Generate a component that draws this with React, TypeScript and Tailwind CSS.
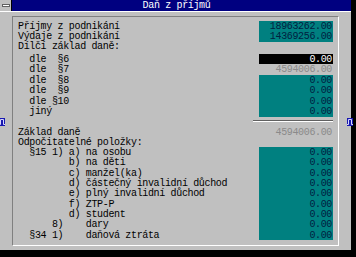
import type { ReactNode } from 'react'

type Tone = 'teal' | 'black' | 'gray' | 'none'

function Row({ label, value, tone = 'none', h }: { label: string; value?: string; tone?: Tone; h: string }) {
  const cell =
    tone === 'teal'
      ? 'bg-[#008080] text-[#002040]'
      : tone === 'black'
        ? 'bg-black text-white'
        : tone === 'gray'
          ? 'text-[#8a8a8a]'
          : ''
  return (
    <div className={`flex items-center ${h}`}>
      <div className="flex-1 whitespace-pre">{label}</div>
      <div className={`w-[74px] h-full flex items-center justify-end pr-[1px] ${cell}`}>{value}</div>
    </div>
  )
}

function Marker({ className }: { className: string }): ReactNode {
  return (
    <svg className={`absolute ${className}`} width="6" height="8" viewBox="0 0 6 8">
      <rect width="6" height="8" fill="#1818b0" />
      <path d="M0 6.5H1.5V1.5H4.5V6.5H6" stroke="#d8d8ff" strokeWidth="1" fill="none" />
    </svg>
  )
}

export default function App() {
  const r = 'h-[10.5px]'
  const s = 'h-[10.3px]'
  return (
    <div
      className="w-[356px] h-[257px] bg-black overflow-hidden text-[10px] tracking-[-0.35px] leading-[9px] text-black"
      style={{ fontFamily: '"Liberation Mono", "DejaVu Sans Mono", monospace' }}
    >
      <div className="w-[351px] h-[250px] flex flex-col bg-[#c0c0c0]">
        {/* Title bar */}
        <div className="h-[12px] flex bg-[#000080] border-b border-white">
          <div className="w-[12px] h-full flex items-center justify-center bg-[#c0c0c0] border-r border-black">
            <div className="w-[8px] h-[3px] bg-white border border-[#606060]" />
          </div>
          <div className="flex-1 flex items-center justify-center pr-[10px] text-white">Daň z příjmů</div>
        </div>

        {/* Body */}
        <div className="relative flex-1 px-[12px] pt-[4px] pb-[4px]">
          <Marker className="left-[-1px] top-[106px]" />
          <Marker className="right-[-2px] top-[106px]" />

          <div className="h-full border-t border-l border-[#808080] border-b border-r border-b-white border-r-white pt-[4px] pl-[5px] pr-[5px]">
            <Row h={s} label="Příjmy z podnikání" value="18963262.00" tone="teal" />
            <Row h={s} label="Výdaje z podnikání" value="14369256.00" tone="teal" />
            <Row h={s} label="Dílčí základ daně:" />
            <div className="h-[2px]" />
            <Row h={r} label="  dle  §6" value="0.00" tone="black" />
            <Row h={r} label="  dle  §7" value="4594006.00" tone="gray" />
            <Row h={r} label="  dle  §8" value="0.00" tone="teal" />
            <Row h={r} label="  dle  §9" value="0.00" tone="teal" />
            <Row h={r} label="  dle §10" value="0.00" tone="teal" />
            <Row h={r} label="  jiný" value="0.00" tone="teal" />
            <div className="h-[10px] flex justify-end pt-[3px]">
              <div className="w-[80px] h-[2px] border-t border-[#606060] border-b border-b-white" />
            </div>
            <Row h={s} label="Základ daně" value="4594006.00" tone="gray" />
            <Row h={s} label="Odpočitatelné položky:" />
            <Row h={s} label="  §15 1) a) na osobu" value="0.00" tone="teal" />
            <Row h={s} label="         b) na děti" value="0.00" tone="teal" />
            <Row h={s} label="         c) manžel(ka)" value="0.00" tone="teal" />
            <Row h={s} label="         d) částečný invalidní důchod" value="0.00" tone="teal" />
            <Row h={s} label="         e) plný invalidní důchod" value="0.00" tone="teal" />
            <Row h={s} label="         f) ZTP-P" value="0.00" tone="teal" />
            <Row h={s} label="         d) student" value="0.00" tone="teal" />
            <Row h={s} label="      8)    dary" value="0.00" tone="teal" />
            <Row h={s} label="  §34 1)    daňová ztráta" value="0.00" tone="teal" />
          </div>
        </div>
      </div>
    </div>
  )
}
